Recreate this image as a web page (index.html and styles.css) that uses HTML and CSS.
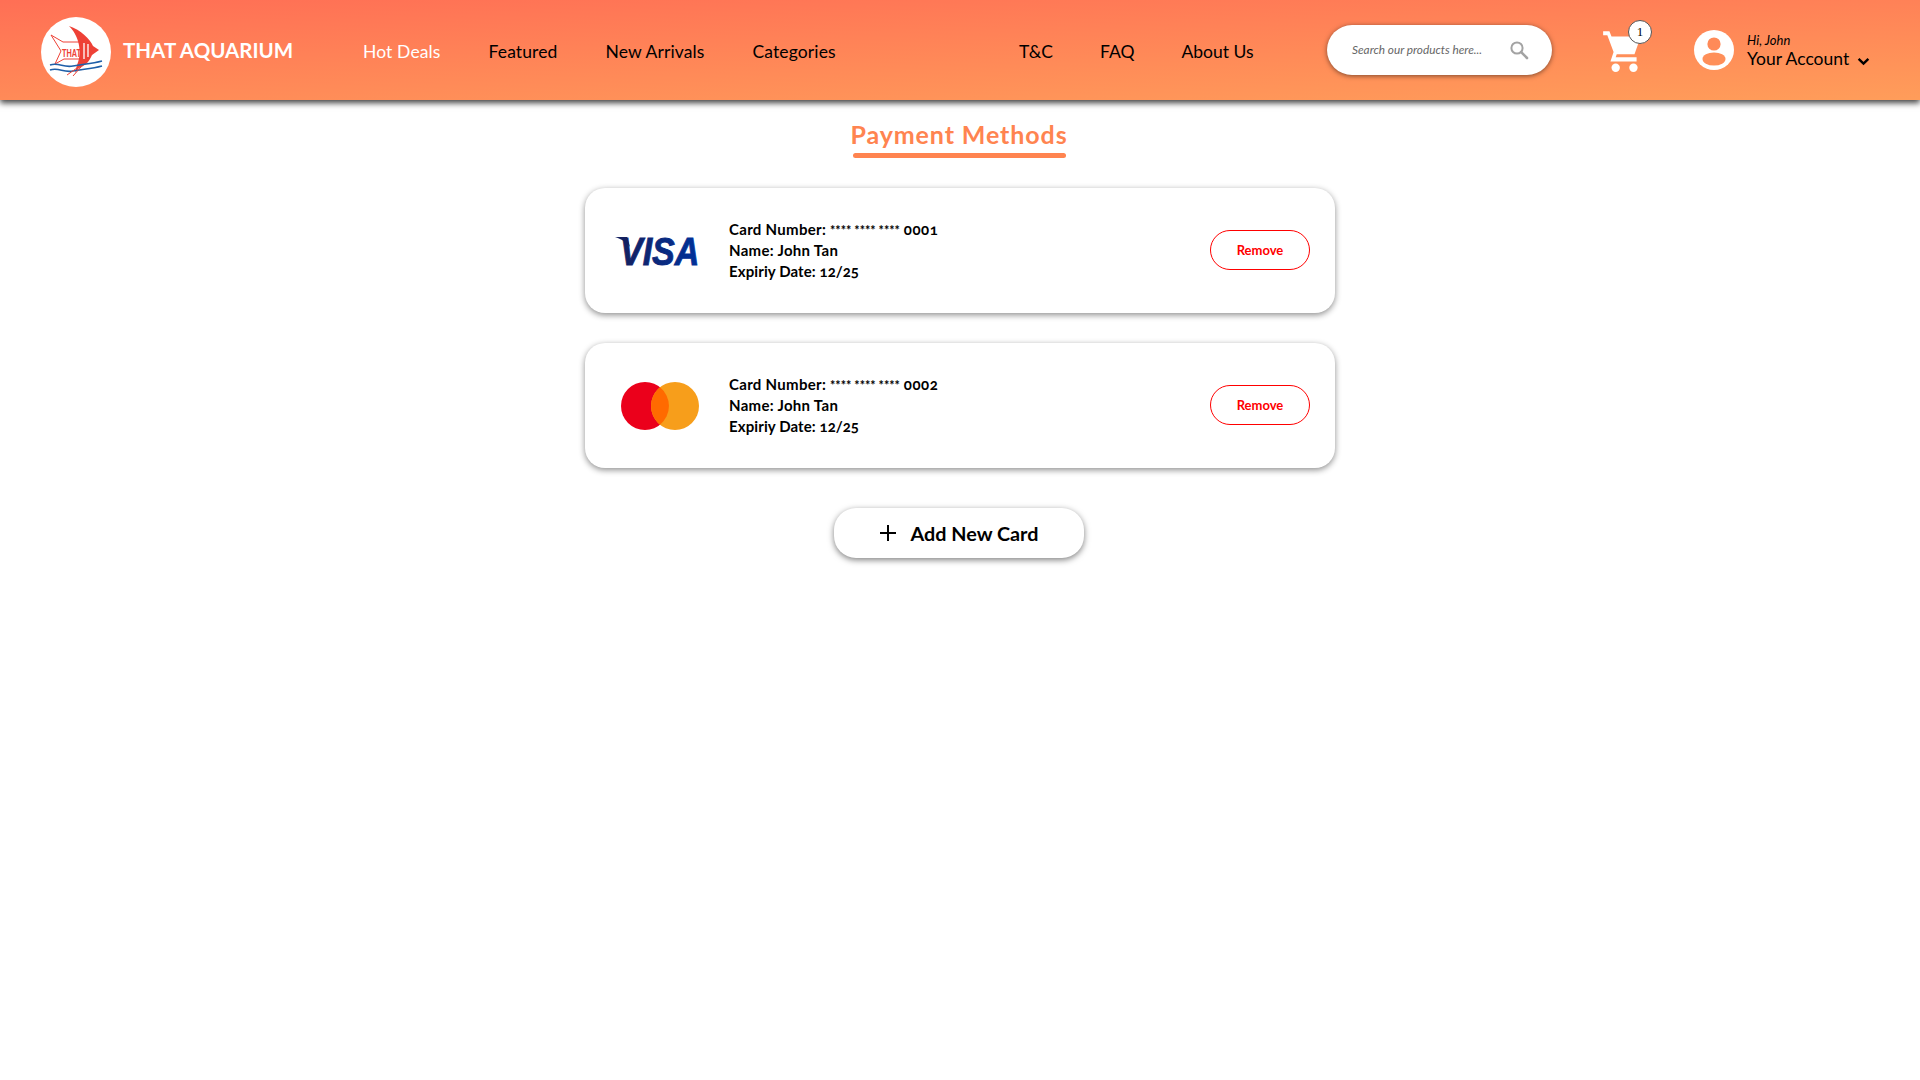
FILE: index.html
```html
<!DOCTYPE html>
<html lang="en">
<head>
<meta charset="utf-8">
<title>Payment Methods - That Aquarium</title>
<link rel="stylesheet" href="styles.css">
</head>
<body>
<header class="topbar">
  <div class="brand">
    <div class="logo">
      <svg viewBox="0 0 70 70" width="70" height="70">
        <path d="M28 9 C40 13 49 22 52 29 L58 33 L51 38 C48 45 44 49 38 51 L34 56 L36 48 C40 40 41 22 28 9Z" fill="#ee4136"/>
        <path d="M43 26 V42 M47 27 V40" stroke="#fff" stroke-width="1.300" fill="none"/>
        <path d="M10 18 L22 25 H40 V42 H23 L14 47 L20 34 Z" fill="none" stroke="#ee4136" stroke-width="1"/>
        <text x="21" y="40" class="logo-text" textLength="19" lengthAdjust="spacingAndGlyphs">THAT</text>
        <path d="M9 48 C18 45 22 51 32 49 C42 47 50 47 61 44" fill="none" stroke="#1f5fa8" stroke-width="1.600"/>
        <path d="M9 53 C18 50 22 56 32 54 C42 52 50 52 61 49" fill="none" stroke="#1f5fa8" stroke-width="1.600"/>
        <path d="M26 58 L36 51 M32 59 L40 50" stroke="#ee4136" stroke-width="1" fill="none"/>
      </svg>
    </div>
    <span class="brand-name">THAT AQUARIUM</span>
  </div>
  <nav class="nav nav-main">
    <a class="nav-link active">Hot Deals</a>
    <a class="nav-link">Featured</a>
    <a class="nav-link">New Arrivals</a>
    <a class="nav-link">Categories</a>
  </nav>
  <nav class="nav nav-side">
    <a class="nav-link">T&amp;C</a>
    <a class="nav-link">FAQ</a>
    <a class="nav-link">About Us</a>
  </nav>
  <div class="search">
    <span class="search-text">Search our products here...</span>
    <svg class="search-icon" viewBox="0 0 20 20" width="20" height="20">
      <circle cx="8" cy="8" r="5.600" fill="none" stroke="#a3a3a3" stroke-width="2"/>
      <path d="M12.200 12.200 L18 18" stroke="#a3a3a3" stroke-width="2.600" stroke-linecap="round"/>
    </svg>
  </div>
  <div class="cart">
    <svg viewBox="0 0 40 44" width="42" height="46">
      <path d="M1 4 H7 L9 9 H37 L31 26 H14 L13 29 H33 V33 H8 L11 24 L5 8 H1Z" fill="#fff"/>
      <circle cx="13" cy="39" r="4" fill="#fff"/>
      <circle cx="30" cy="39" r="4" fill="#fff"/>
    </svg>
    <span class="badge">1</span>
  </div>
  <div class="account">
    <svg viewBox="0 0 40 40" width="40" height="40">
      <circle cx="20" cy="20" r="20" fill="#fff"/>
      <circle cx="20" cy="14" r="6.600" fill="#ff8a58"/>
      <ellipse cx="20" cy="29" rx="11.500" ry="6.600" fill="#ff8f59"/>
    </svg>
    <div class="account-text">
      <span class="greeting">Hi, John</span>
      <span class="account-label">Your Account
        <svg class="chevron" viewBox="0 0 12 8" width="13" height="9"><path d="M1.500 1.500 L6 6 L10.500 1.500" fill="none" stroke="#000" stroke-width="2.200"/></svg>
      </span>
    </div>
  </div>
</header>

<main class="content">
  <h1 class="page-title">Payment Methods</h1>

  <section class="pay-card">
    <div class="card-logo">
      <svg viewBox="0 -6 90 46" width="90" height="46">
        <defs>
          <linearGradient id="visaInk" x1="0" x2="1" y1="0" y2="0">
            <stop offset="0" stop-color="#14205f"/>
            <stop offset="1" stop-color="#00329b"/>
          </linearGradient>
        </defs>
        <text transform="translate(5 31) scale(1 1.130)" class="visa-text" fill="url(#visaInk)" stroke="url(#visaInk)" stroke-width="0.800">VISA</text>
        <path d="M0 3 H12 L15 13 C12 8 6 5 0 3Z" fill="#14205f"/>
      </svg>
    </div>
    <div class="card-info">
      <div>Card Number: <span class="stars">**** **** ****</span> <span class="num">0001</span></div>
      <div>Name: John Tan</div>
      <div class="expiry">Expiriy Date: <span class="date">12/25</span></div>
    </div>
    <button class="remove">Remove</button>
  </section>

  <section class="pay-card">
    <div class="card-logo">
      <svg class="mc-mark" viewBox="0 0 78 48" width="78" height="48">
        <circle cx="24" cy="24" r="24" fill="#eb001b"/>
        <circle cx="54" cy="24" r="24" fill="#f79e1b"/>
        <path d="M39 5.300 A24 24 0 0 1 39 42.700 A24 24 0 0 1 39 5.300Z" fill="#ff6a00"/>
      </svg>
    </div>
    <div class="card-info">
      <div>Card Number: <span class="stars">**** **** ****</span> <span class="num">0002</span></div>
      <div>Name: John Tan</div>
      <div class="expiry">Expiriy Date: <span class="date">12/25</span></div>
    </div>
    <button class="remove">Remove</button>
  </section>

  <button class="add-card">
    <svg viewBox="0 0 16 16" width="16" height="16"><path d="M8 0 V16 M0 8 H16" stroke="#000" stroke-width="2"/></svg>
    <span>Add New Card</span>
  </button>
</main>
</body>
</html>
```

FILE: styles.css
```css
* { box-sizing: border-box; }
html, body { margin: 0; padding: 0; }
body {
  background: #fff;
  font-family: "Lato", "Noto Sans", sans-serif;
  color: #000;
  min-height: 1080px;
}
.topbar {
  height: 100px;
  display: flex;
  align-items: center;
  padding-left: 41px;
  background: linear-gradient(178deg, #ff6f55 0%, #ff9d5a 100%);
  box-shadow: 0 3px 6px rgba(0, 0, 0, 0.75);
}
.brand { display: flex; align-items: center; gap: 12px; width: 322px; }
.logo {
  width: 70px; height: 70px; border-radius: 50%;
  background: #fff; flex: none;
  margin-top: 4px;
}
.logo svg { display: block; }
.logo-text { font: 700 10px "Liberation Sans", sans-serif; fill: #ee4136; }
.brand-name { font-size: 20.500px; font-weight: 700; color: #fff; white-space: nowrap; }
.nav { display: flex; align-items: center; font-size: 17.500px; }
.nav-main { width: 656px; padding-top: 2px; gap: 48px; letter-spacing: 0.12px; }
.nav-side { width: 308px; padding-top: 2px; gap: 47px; }
.nav-link { color: #000; white-space: nowrap; }
.nav-link.active { color: #fff; }
.search {
  width: 225px; height: 50px; border-radius: 25px;
  background: #fff;
  box-shadow: 0 1px 5px rgba(0, 0, 0, 0.5);
  display: flex; align-items: center; justify-content: space-between;
  padding: 0 23px 0 25px;
}
.search-text { font-size: 11.800px; font-style: italic; color: #666; white-space: nowrap; margin-bottom: 2px; }
.search-icon { flex: none; }
.cart { position: relative; margin-left: 50px; width: 42px; height: 46px; }
.cart svg { display: block; }
.badge {
  position: absolute; top: -7px; right: -8px;
  width: 24px; height: 24px; border-radius: 50%;
  background: #fff; border: 1px solid #555;
  font: 400 13px "Liberation Serif", serif;
  display: flex; align-items: center; justify-content: center;
}
.account { display: flex; align-items: center; gap: 13px; margin-left: 50px; }
.account svg { display: block; }
.account-text { display: flex; flex-direction: column; padding-top: 2px; }
.greeting { font-size: 13px; font-style: italic; line-height: 16px; }
.account-label { font-size: 17.500px; line-height: 22px; display: flex; align-items: center; gap: 8px; white-space: nowrap; }
.account-label .chevron { margin-top: 4px; }

.content { display: flex; flex-direction: column; align-items: center; padding-top: 19px; }
.page-title {
  margin: 0 2px 30px 0;
  width: 213px;
  font-size: 25px; font-weight: 700; line-height: 30px;
  letter-spacing: 0.9px;
  color: #ff8450; text-align: center; white-space: nowrap;
  display: flex; flex-direction: column; align-items: center;
}
.page-title::after {
  content: "";
  display: block;
  width: 213px; height: 5px;
  margin-top: 4px;
  border-radius: 3px;
  background: #ff8450;
}
.pay-card {
  width: 750px; height: 125px;
  margin-bottom: 30px;
  border-radius: 20px;
  background: #fff;
  box-shadow: 0 2px 6px rgba(0, 0, 0, 0.45);
  display: flex; align-items: center;
  padding: 0 25px 0 30px;
}
.card-logo { width: 114px; display: flex; align-items: center; flex: none; }
.card-logo svg { display: block; }
.card-logo .mc-mark { margin-left: 6px; }
.card-info { flex: 1; font-size: 15px; font-weight: 700; line-height: 20.800px; letter-spacing: 0.3px; white-space: nowrap; }
.stars { font-size: 12.500px; letter-spacing: 0; line-height: 1; }
.num { font-variant-numeric: oldstyle-nums; letter-spacing: 0.5px; }
.date { font-variant-numeric: oldstyle-nums; letter-spacing: 0; }
.expiry { letter-spacing: 0.1px; }
.remove {
  width: 100px; height: 40px; border-radius: 20px;
  background: #fff; border: 1.500px solid #f00;
  color: #f00; font: 700 13px "Lato", sans-serif;
  padding: 0;
  margin-bottom: 1px;
}
.add-card {
  margin: 10px 2px 0 0;
  width: 250px; height: 50px; border: 0; border-radius: 22px;
  background: #fff;
  box-shadow: 0 2px 6px rgba(0, 0, 0, 0.5);
  display: flex; align-items: center; justify-content: center; gap: 15px;
  font: 700 19.800px "Lato", sans-serif; color: #000;
}
.add-card svg { display: block; }
.visa-text { font: italic 700 34px "Liberation Sans", sans-serif; }
```
